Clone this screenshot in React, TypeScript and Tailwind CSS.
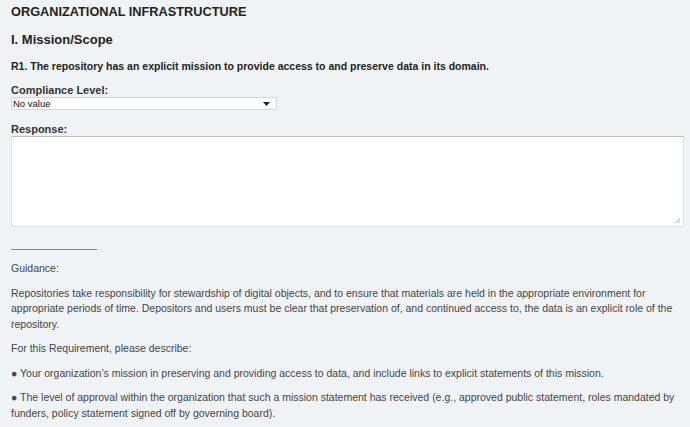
import React from 'react';

const font = "font-['Liberation_Sans',Arial,sans-serif]";

export default function App() {
  return (
    <div className={`min-h-[427px] w-[690px] bg-[#f0f3f6] px-[11px] pt-[5px] text-[#333] ${font}`}>
      <h1 className="text-[12.75px] font-bold leading-[14px] text-[#222]">ORGANIZATIONAL INFRASTRUCTURE</h1>
      <h2 className="mt-[12px] text-[13px] font-bold leading-[17px] text-[#222]">I. Mission/Scope</h2>
      <p className="mt-[12px] text-[10.5px] font-bold leading-[13px] text-[#222]">
        R1. The repository has an explicit mission to provide access to and preserve data in its domain.
      </p>

      <div className="mt-[10px]">
        <label className="block text-[11px] font-bold leading-[14px] text-[#333]">Compliance Level:</label>
        <div className="flex h-[13px] w-[266px] items-center justify-between rounded-[1px] border border-[#d6d6d6] bg-white pl-[1px] pr-[6px]">
          <span className="text-[9.5px] leading-[11px] text-[#111]">No value</span>
          <svg width="7" height="4" viewBox="0 0 7 4">
            <path d="M0 0h7L3.5 4z" fill="#222" />
          </svg>
        </div>
      </div>

      <div className="mt-[12px]">
        <label className="block text-[11px] font-bold leading-[14px] text-[#333]">Response:</label>
        <div className="relative h-[91px] w-[673px] border border-[#dde2e6] border-t-[#bdbdbd] bg-white">
          <svg className="absolute bottom-[3px] right-[3px]" width="6" height="6" viewBox="0 0 6 6">
            <path d="M5 1v5M3 3v3M1 5v1" stroke="#b8b8b8" strokeWidth="1" />
          </svg>
        </div>
      </div>

      <div className="mt-[22px] h-px w-[86px] bg-[#888]" />

      <div className="mt-[11px] text-[10.5px] leading-[15.5px] text-[#444]">
        <p>Guidance:</p>
        <p className="mt-[9px]">
          Repositories take responsibility for stewardship of digital objects, and to ensure that materials are held in the appropriate environment for appropriate periods of time. Depositors and users must be clear that preservation of, and continued access to, the data is an explicit role of the repository.
        </p>
        <p className="mt-[9px]">For this Requirement, please describe:</p>
        <p className="mt-[9px]">● Your organization’s mission in preserving and providing access to data, and include links to explicit statements of this mission.</p>
        <p className="mt-[9px]">
          ● The level of approval within the organization that such a mission statement has received (e.g., approved public statement, roles mandated by funders, policy statement signed off by governing board).
        </p>
      </div>
    </div>
  );
}
